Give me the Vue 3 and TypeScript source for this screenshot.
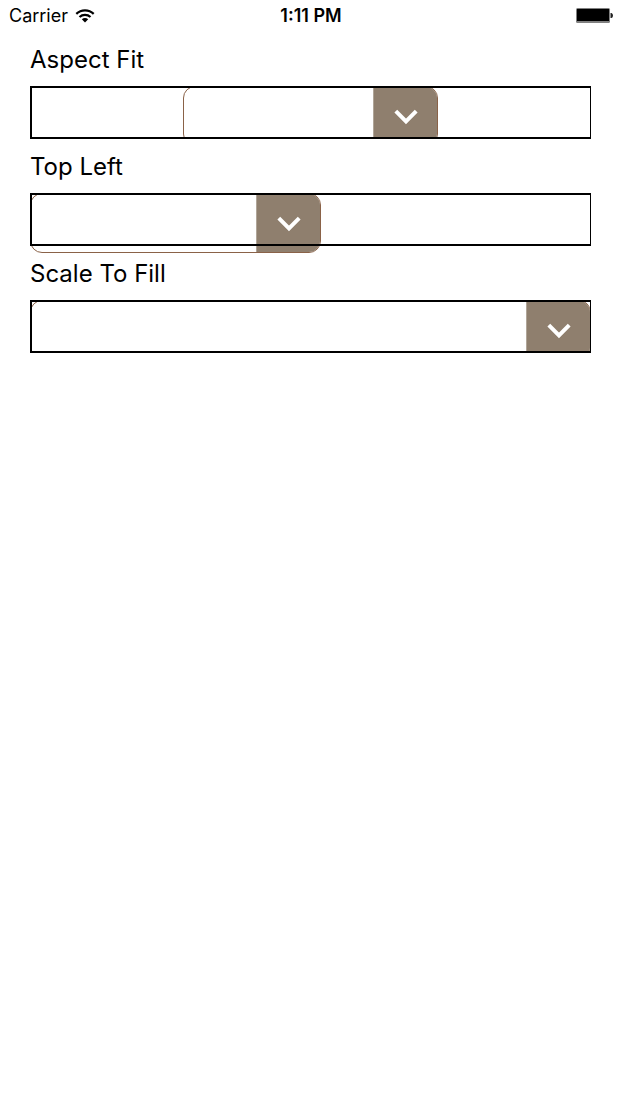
<script setup lang="ts">
interface Field {
  id: string
  label: string
  mode: 'fit' | 'top-left' | 'fill'
}

const fields: Field[] = [
  { id: 'aspect-fit', label: 'Aspect Fit', mode: 'fit' },
  { id: 'top-left', label: 'Top Left', mode: 'top-left' },
  { id: 'scale-to-fill', label: 'Scale To Fill', mode: 'fill' },
]
</script>

<template>
  <div class="screen">
    <header class="status">
      <div class="network">
        <span>Carrier</span>
        <svg class="wifi" viewBox="0 0 20 14" width="20" height="14" aria-hidden="true">
          <path d="M1.3 4.9C6.2 0.2 13.8 0.2 18.7 4.9" />
          <path d="M4.5 8C7.6 5.1 12.4 5.1 15.5 8" />
          <path class="dot" d="M6.8 10.2C8.6 8.7 11.4 8.7 13.2 10.2L10 13.4Z" />
        </svg>
      </div>
      <time class="time">1:11 PM</time>
      <svg class="battery" viewBox="0 0 37 15" width="37" height="15" aria-hidden="true">
        <rect x="0" y="0" width="34" height="15" rx="1.5" fill="#808080" />
        <rect x="1" y="1" width="32" height="12" fill="#000" />
        <path d="M34.5 5H35.5Q37 5.5 37 7.5T35.5 10H34.5Z" fill="#222" />
      </svg>
    </header>

    <main class="fields">
      <section v-for="field in fields" :key="field.id" class="field">
        <label class="label" :for="field.id">{{ field.label }}</label>
        <button :id="field.id" type="button" class="picker" :class="field.mode">
          <span class="art">
            <span class="arrow">
              <svg viewBox="0 0 24 16" width="24" height="16" aria-hidden="true">
                <path d="M1.8 2.2L12 12.4L22.2 2.2" />
              </svg>
            </span>
          </span>
        </button>
      </section>
    </main>
  </div>
</template>

<style>
body {
  background: #fff;
}
</style>

<style scoped>
.screen {
  min-height: 100vh;
  color: #000;
  font-family: Inter, Roboto, "Liberation Sans", sans-serif;
}

.status {
  display: grid;
  grid-template-columns: 1fr auto 1fr;
  align-items: center;
  height: 31px;
  padding: 0 8px 0 9px;
  font-size: 18px;
}

.network {
  display: flex;
  align-items: center;
  gap: 7px;
}

.wifi path {
  fill: none;
  stroke: #000;
  stroke-width: 2.2;
}

.wifi .dot {
  fill: #000;
  stroke: none;
}

.time {
  font-weight: 600;
}

.battery {
  justify-self: end;
}

.fields {
  display: flex;
  flex-direction: column;
  gap: 12px;
  padding: 13px 30px 0;
}

.label {
  display: block;
  height: 42px;
  font-size: 24px;
  line-height: 32px;
}

.picker {
  position: relative;
  display: flex;
  width: 100%;
  height: 53px;
  padding: 0;
  border: 0;
  background: none;
}

.picker::after {
  content: "";
  position: absolute;
  inset: 0;
  border: 2px solid #000;
  border-right-width: 1px;
}

.art {
  display: flex;
  flex: none;
  justify-content: flex-end;
  box-sizing: border-box;
  width: 100%;
  height: 60px;
  overflow: hidden;
  border: 1px solid #8a6248;
  border-radius: 12px;
}

.fit {
  justify-content: center;
  overflow: hidden;
}

.fit .art {
  width: 255px;
}

.top-left .art {
  width: 291px;
}

.fill {
  overflow: hidden;
}

.arrow {
  display: flex;
  align-items: center;
  justify-content: center;
  box-sizing: border-box;
  width: 64px;
  padding-top: 2px;
  border-left: 1px solid #b0a598;
  background: #8f7f6e;
}

.arrow path {
  fill: none;
  stroke: #fff;
  stroke-width: 4;
}
</style>
